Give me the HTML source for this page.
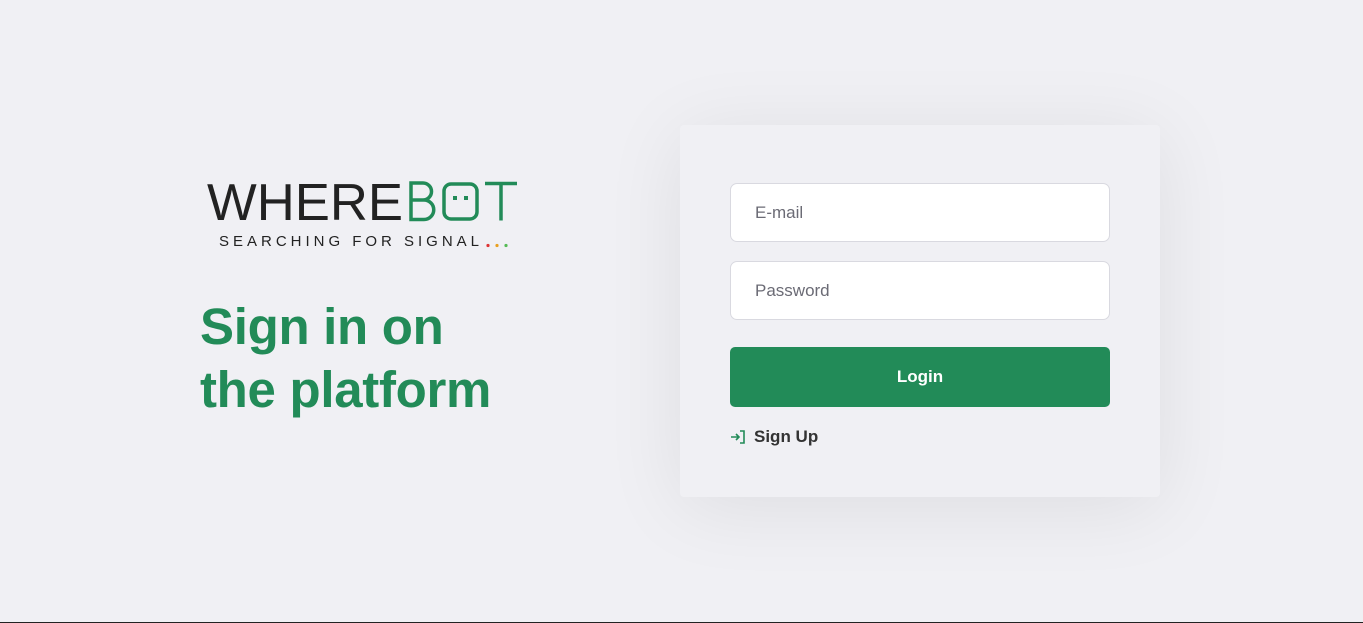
<!DOCTYPE html>
<html><head><style>
html,body{margin:0;padding:0}
body{width:1363px;height:623px;background:#f0f0f4;font-family:"Liberation Sans",sans-serif;position:relative;overflow:hidden;border-bottom:1px solid #222;box-sizing:border-box}
.h{position:absolute;left:200px;top:295px;font-size:51px;font-weight:bold;color:#228b58;line-height:63px;letter-spacing:-0.3px}
.card{position:absolute;left:680px;top:125px;width:480px;height:372px;background:#f0f0f4;border-radius:4px;box-shadow:0 10px 80px rgba(0,0,0,0.08)}
.in{position:absolute;left:50px;width:378px;height:57px;background:#fff;border:1px solid #d9d9e0;border-radius:7px;font-size:17px;color:#6b6b75;line-height:57px;text-indent:24px}
.btn{position:absolute;left:50px;top:222px;width:380px;height:60px;background:#228b58;border-radius:5px;color:#fff;font-weight:bold;font-size:17px;text-align:center;line-height:60px}
.su{position:absolute;left:50px;top:302px;font-size:17px;font-weight:bold;color:#333;display:flex;align-items:center;gap:8px}
</style></head><body>
<svg style="position:absolute;left:200px;top:170px" width="330" height="90">
<text x="7" y="50" font-family="Liberation Sans" font-size="52" fill="#222" textLength="196" lengthAdjust="spacingAndGlyphs">WHERE</text>
<path d="M211 13h12a8.5 8.5 0 0 1 0 17h-12zM211 30h13a9.7 9.7 0 0 1 0 19.5h-13z" fill="none" stroke="#228b58" stroke-width="3.5"/>
<rect x="244" y="14" width="33" height="35" rx="7" fill="none" stroke="#228b58" stroke-width="3.5"/>
<rect x="253" y="26" width="4" height="4" fill="#228b58"/><rect x="264" y="26" width="4" height="4" fill="#228b58"/>
<path d="M285 13.5h32M301 13.5v37" stroke="#228b58" stroke-width="3.5"/>
<text x="19" y="76" font-family="Liberation Sans" font-size="15" fill="#222" textLength="260" lengthAdjust="spacing">SEARCHING FOR SIGNAL</text>
<circle cx="288" cy="75.5" r="1.6" fill="#d33"/><circle cx="297" cy="75.5" r="1.6" fill="#e9a020"/><circle cx="306" cy="75.5" r="1.6" fill="#5b5"/>
</svg>
<div class="h">Sign in on<br>the platform</div>
<div class="card">
<div class="in" style="top:58px">E-mail</div>
<div class="in" style="top:136px">Password</div>
<div class="btn">Login</div>
<div class="su"><svg width="16" height="16" viewBox="0 0 16 16" fill="none" stroke="#228b58" stroke-width="1.6"><path d="M1 8h8M6 5l3 3-3 3M10 2h4v12h-4"/></svg>Sign Up</div>
</div>
</body></html>
